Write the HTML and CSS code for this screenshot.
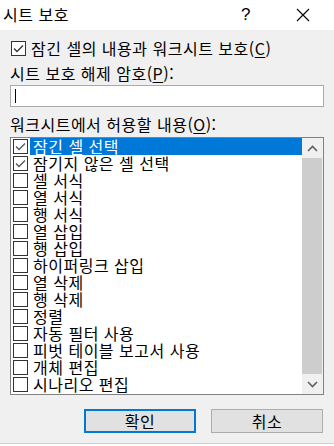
FILE: index.html
```html
<!DOCTYPE html>
<html lang="ko">
  <head>
    <meta charset="UTF-8" />
    <title>시트 보호</title>
    <link rel="stylesheet" href="styles.css">
  </head>
  <body>
    <div class="dialog">
      <div class="titlebar">
        <span class="title">시트 보호</span>
        <span class="help">?</span>
        <span class="close">
          <svg width="14" height="14" viewBox="0 0 14 14">
            <path d="M1 1 L13 13 M13 1 L1 13" stroke="#000" stroke-width="1.1" fill="none" />
          </svg>
        </span>
      </div>

      <div class="body">
        <div class="check-row">
          <span class="box">
            <svg width="13" height="13" viewBox="0 0 13 13">
              <path d="M2 6.5 L5 9.5 L11 3.5" stroke="#333" stroke-width="1.3" fill="none" />
            </svg>
          </span>
          <span>잠긴 셀의 내용과 워크시트 보호(<u>C</u>)</span>
        </div>

        <div class="label pw-label">시트 보호 해제 암호(<u>P</u>):</div>
        <div class="input"><span class="caret"></span></div>

        <div class="label list-label">워크시트에서 허용할 내용(<u>O</u>):</div>

        <div class="listbox">
          <ul class="items">
            <li class="item selected">
              <span class="box"><svg width="13" height="13" viewBox="0 0 13 13"><path d="M2 6.5 L5 9.5 L11 3.5" stroke="#555" stroke-width="1.3" fill="none" /></svg></span>
              <span class="text">잠긴 셀 선택</span>
            </li>
            <li class="item">
              <span class="box"><svg width="13" height="13" viewBox="0 0 13 13"><path d="M2 6.5 L5 9.5 L11 3.5" stroke="#555" stroke-width="1.3" fill="none" /></svg></span>
              <span class="text">잠기지 않은 셀 선택</span>
            </li>
            <li class="item"><span class="box"></span><span class="text">셀 서식</span></li>
            <li class="item"><span class="box"></span><span class="text">열 서식</span></li>
            <li class="item"><span class="box"></span><span class="text">행 서식</span></li>
            <li class="item"><span class="box"></span><span class="text">열 삽입</span></li>
            <li class="item"><span class="box"></span><span class="text">행 삽입</span></li>
            <li class="item"><span class="box"></span><span class="text">하이퍼링크 삽입</span></li>
            <li class="item"><span class="box"></span><span class="text">열 삭제</span></li>
            <li class="item"><span class="box"></span><span class="text">행 삭제</span></li>
            <li class="item"><span class="box"></span><span class="text">정렬</span></li>
            <li class="item"><span class="box"></span><span class="text">자동 필터 사용</span></li>
            <li class="item"><span class="box"></span><span class="text">피벗 테이블 보고서 사용</span></li>
            <li class="item"><span class="box"></span><span class="text">개체 편집</span></li>
            <li class="item"><span class="box"></span><span class="text">시나리오 편집</span></li>
          </ul>
          <div class="scrollbar">
            <div class="arrow">
              <svg width="11" height="7" viewBox="0 0 11 7"><path d="M1 6 L5.5 1.5 L10 6" stroke="#606060" stroke-width="1.6" fill="none" /></svg>
            </div>
            <div class="thumb"></div>
            <div class="arrow">
              <svg width="11" height="7" viewBox="0 0 11 7"><path d="M1 1 L5.5 5.5 L10 1" stroke="#606060" stroke-width="1.6" fill="none" /></svg>
            </div>
          </div>
        </div>

        <div class="buttons">
          <button class="btn default">확인</button>
          <button class="btn">취소</button>
        </div>
      </div>
    </div>
  </body>
</html>
```

FILE: styles.css
```css
* {
  margin: 0;
  padding: 0;
  box-sizing: border-box;
}

body {
  font-family: "Noto Sans CJK KR", "Noto Sans", sans-serif;
  font-size: 16px;
  letter-spacing: 0.5px;
  color: #000;
  background: #fff;
  width: 334px;
  height: 446px;
  overflow: hidden;
}

.dialog {
  width: 334px;
}

.titlebar {
  height: 30px;
  background: #fff;
  display: flex;
  align-items: center;
  padding-left: 3px;
}

.title {
  flex: 1;
  line-height: 17px;
  padding-bottom: 2px;
}

.help {
  width: 20px;
  text-align: center;
  font-family: "Liberation Sans", sans-serif;
  font-size: 17px;
  margin-right: 40px;
  padding-bottom: 1px;
}

.close {
  display: flex;
  margin-right: 24px;
  padding-bottom: 1px;
}

.body {
  background: #f0f0f0;
  height: 414px;
  padding: 11px 10px 0 10px;
  border-bottom: 1px solid #cfcfcf;
}

.box {
  width: 15px;
  height: 15px;
  border: 1px solid #333;
  background: #fff;
  display: flex;
  align-items: center;
  justify-content: center;
  flex-shrink: 0;
}

.check-row {
  display: flex;
  align-items: center;
  gap: 5px;
  height: 15px;
  padding-left: 1px;
  line-height: 15px;
}

u {
  text-decoration: underline;
  text-underline-offset: 2px;
}

.label {
  line-height: 17px;
  height: 17px;
}

.pw-label {
  margin-top: 9px;
}

.input {
  margin-top: 3px;
  height: 22px;
  background: #fff;
  border: 1px solid #aaaaaa;
  padding: 3px 4px;
}

.caret {
  display: block;
  width: 1px;
  height: 14px;
  background: #000;
}

.list-label {
  margin-top: 9px;
}

.listbox {
  margin-top: 4px;
  height: 258px;
  border: 1px solid #828282;
  background: #fff;
  display: flex;
}

.items {
  list-style: none;
  flex: 1;
  padding-left: 2px;
}

.item {
  height: 17px;
  display: flex;
  align-items: center;
  gap: 2px;
}

.item .text {
  flex: 1;
  height: 17px;
  line-height: 17px;
  padding-left: 3px;
}

.item.selected .text {
  background: #0078d7;
  color: #fff;
}

.scrollbar {
  width: 21px;
  background: #f0f0f0;
  display: flex;
  flex-direction: column;
  padding-right: 1px;
}

.arrow {
  height: 20px;
  display: flex;
  align-items: center;
  justify-content: center;
}

.thumb {
  flex: 1;
  background: #cdcdcd;
}

.buttons {
  margin-top: 14px;
  display: flex;
  justify-content: flex-end;
  gap: 15px;
  padding-right: 1px;
}

.btn {
  width: 112px;
  height: 24px;
  background: #e1e1e1;
  border: 1px solid #adadad;
  font-family: inherit;
  font-size: 16px;
  letter-spacing: 0.5px;
  line-height: 20px;
  color: #000;
}

.btn.default {
  border: 2px solid #0078d7;
}
```
